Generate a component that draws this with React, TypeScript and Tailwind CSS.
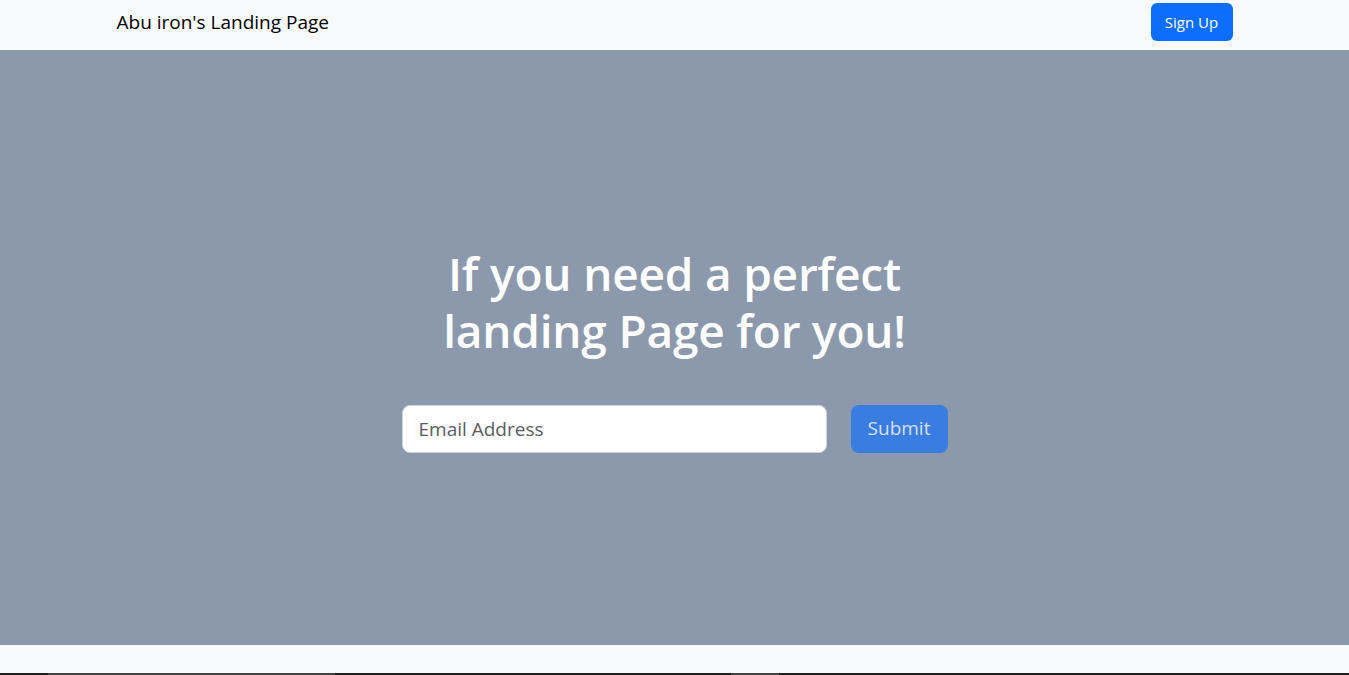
import React from 'react';

export default function App() {
  return (
    <div className="min-h-screen bg-[#f8f9fa] font-['Open_Sans','Noto_Sans',sans-serif]">
      {/* Navbar */}
      <nav className="h-[50px] bg-[#f8f9fa]">
        <div className="max-w-[1140px] mx-auto px-3 pt-[3px] flex items-start justify-between">
          <span className="text-[19px] leading-[38px] text-black">Abu iron's Landing Page</span>
          <button className="h-[38px] w-[82px] rounded-md bg-[#0d6efd] text-white text-[15px]">Sign Up</button>
        </div>
      </nav>

      {/* Hero */}
      <section className="h-[595px] bg-[#8c99ac] flex flex-col items-center justify-center">
        <h1 className="mt-[2px] text-[46px] leading-[57px] font-semibold text-white text-center whitespace-nowrap tracking-[-0.2px]">
          If you need a perfect
          <br />
          landing Page for you!
        </h1>
        <form className="mt-[46px] flex gap-6" onSubmit={(e) => e.preventDefault()}>
          <input
            type="email"
            placeholder="Email Address"
            className="w-[425px] h-[48px] rounded-lg border border-[#ced4da] bg-white px-4 text-[19px] placeholder:text-[#595c5f] outline-none"
          />
          <button className="w-[97px] h-[48px] rounded-lg bg-[#397de0] text-[#d9dff0] text-[19px]">Submit</button>
        </form>
      </section>

      {/* Next section */}
      <section className="h-[28px] bg-[#f8f9fa]" />
      <div className="h-[40px] bg-[#1e1e1e] flex items-start">
        <div className="ml-[48px] w-[287px] h-full bg-[#454545]" />
        <div className="ml-[396px] w-[48px] h-full bg-[#454545]" />
      </div>
    </div>
  );
}
